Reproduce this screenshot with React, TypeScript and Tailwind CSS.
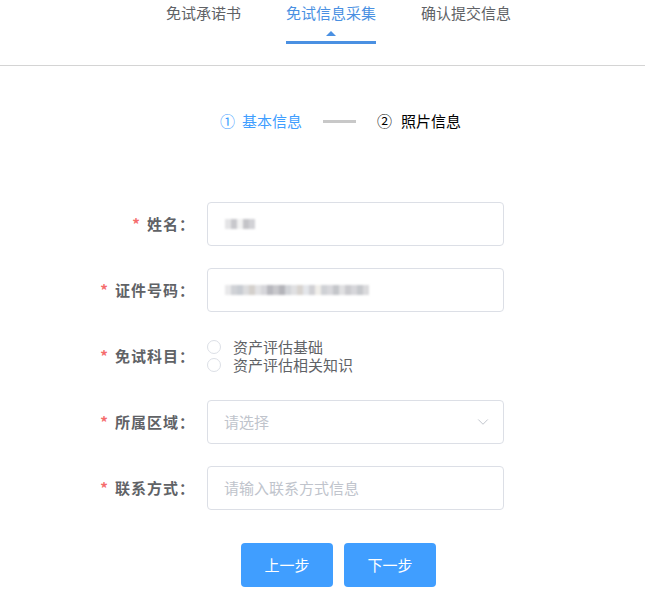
import { ChevronDown } from "lucide-react";

const font = { fontFamily: '"Noto Sans CJK SC", "Noto Sans", sans-serif' };

function Blur({ widths }: { widths: string[] }) {
  return (
    <div className="flex items-center blur-[1.2px]">
      {widths.map((c, i) => (
        <span key={i} className="w-[6px] h-[10px]" style={{ backgroundColor: c }} />
      ))}
    </div>
  );
}

function Label({ text }: { text: string }) {
  return (
    <div className="w-[130px] pr-[12px] text-right text-[15px] font-bold text-[#606266] shrink-0 tracking-[1px]">
      <span className="text-[#f56c6c] mr-[6px]">*</span>
      {text}：
    </div>
  );
}

export default function App() {
  const nameBlur = ["#e4e4e6", "#c8c8cc", "#f2f2f2", "#c4c4c8", "#d2d2d6"];
  const idBlur = [
    "#e8e8ea", "#d0d2d6", "#c8ccd2", "#dcdcde", "#d4d0cc", "#e2e2e4", "#d6d6da", "#b8b8be",
    "#c8c8cc", "#b4b4ba", "#d2d4d8", "#e0e0e2", "#d8d4d0", "#e4e6ea", "#d0d0d4", "#f0eeea",
    "#cfd1d5", "#d8d8dc", "#c4c6ca", "#e0e0e2", "#cacace", "#d6d6da", "#c6c8cc", "#dadadc",
  ];

  return (
    <div className="w-[645px] h-[601px] bg-white overflow-hidden" style={font}>
      {/* Tabs */}
      <div className="h-[66px] border-b border-[#d4d4d4] flex justify-center gap-[45px] pl-[32px]">
        <div className="text-[15px] text-[#606266] leading-[26px]">免试承诺书</div>
        <div className="flex flex-col items-center">
          <div className="text-[15px] text-[#4a90e2] leading-[26px]">免试信息采集</div>
          <div className="mt-[5px] w-0 h-0 border-l-[5px] border-r-[5px] border-b-[5px] border-l-transparent border-r-transparent border-b-[#4a90e2]" />
          <div className="mt-[5px] w-[90px] h-[3px] bg-[#4a90e2]" />
        </div>
        <div className="text-[15px] text-[#606266] leading-[26px]">确认提交信息</div>
      </div>

      {/* Steps */}
      <div className="mt-[45px] flex items-center ml-[220px] text-[15px] leading-[20px]">
        <span className="text-[#409eff]">①</span>
        <span className="text-[#409eff] ml-[7px]">基本信息</span>
        <span className="ml-[21px] w-[33px] h-[3px] bg-[#c8c8c8]" />
        <span className="text-black ml-[21px]">②</span>
        <span className="text-black ml-[9px]">照片信息</span>
      </div>

      {/* Form */}
      <div className="mt-[71px] ml-[77px] flex flex-col gap-[22px]">
        <div className="flex items-center">
          <Label text="姓名" />
          <div className="w-[297px] h-[44px] border border-[#dcdfe6] rounded-[4px] flex items-center px-[17px]">
            <Blur widths={nameBlur} />
          </div>
        </div>
        <div className="flex items-center">
          <Label text="证件号码" />
          <div className="w-[297px] h-[44px] border border-[#dcdfe6] rounded-[4px] flex items-center px-[17px]">
            <Blur widths={idBlur} />
          </div>
        </div>
        <div className="flex items-center h-[44px]">
          <Label text="免试科目" />
          <div className="flex flex-col text-[15px] text-[#606266] leading-[18px]">
            {["资产评估基础", "资产评估相关知识"].map((t) => (
              <label key={t} className="flex items-center">
                <span className="w-[14px] h-[14px] rounded-full border border-[#dcdfe6] bg-white mr-[12px]" />
                {t}
              </label>
            ))}
          </div>
        </div>
        <div className="flex items-center">
          <Label text="所属区域" />
          <div className="w-[297px] h-[44px] border border-[#dcdfe6] rounded-[4px] flex items-center justify-between pl-[16px] pr-[11px] text-[15px] text-[#c0c4cc]">
            请选择
            <ChevronDown size={18} strokeWidth={1.3} className="text-[#c0c4cc]" />
          </div>
        </div>
        <div className="flex items-center">
          <Label text="联系方式" />
          <div className="w-[297px] h-[44px] border border-[#dcdfe6] rounded-[4px] flex items-center px-[16px] text-[15px] text-[#c0c4cc]">
            请输入联系方式信息
          </div>
        </div>
      </div>

      {/* Buttons */}
      <div className="mt-[33px] ml-[241px] flex gap-[11px]">
        <button className="w-[92px] h-[44px] rounded-[4px] bg-[#409eff] text-white text-[15px]">上一步</button>
        <button className="w-[92px] h-[44px] rounded-[4px] bg-[#409eff] text-white text-[15px]">下一步</button>
      </div>
    </div>
  );
}
